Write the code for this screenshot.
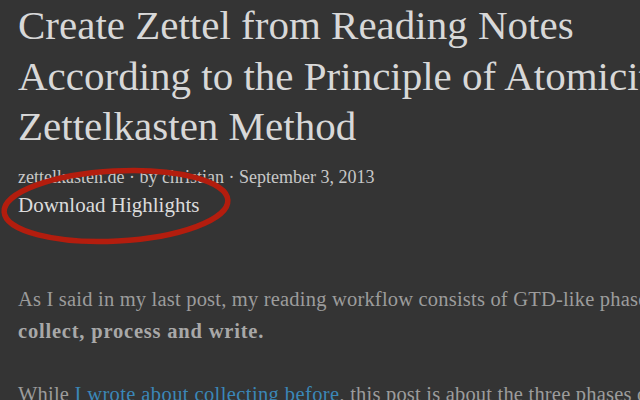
export default function App() {
  return (
    <div className="relative w-[640px] h-[400px] overflow-hidden bg-[#343434]" style={{ fontFamily: '"Liberation Serif", serif' }}>
      <div className="pl-[18px] whitespace-nowrap">
        <h1 className="text-[41px] leading-[50.5px] text-[#d8d8d8] font-normal">
          Create Zettel from Reading Notes
          <br />
          According to the Principle of Atomicity in the
          <br />
          Zettelkasten Method
        </h1>
        <div className="mt-[14px] text-[18px] leading-[22px] text-[#c8c8c8]">
          zettelkasten.de · by christian · September 3, 2013
        </div>
        <div className="mt-[4px] text-[21px] leading-[26px] text-[#dcdcdc]">Download Highlights</div>
        <p className="mt-[65px] text-[20.5px] leading-[32px] text-[#9c9c9c] tracking-[0.2px]">
          As I said in my last post, my reading workflow consists of GTD-like phases:
          <br />
          <b className="font-bold text-[#a8a8a8] tracking-[0.8px]">collect, process and write.</b>
        </p>
        <p className="mt-[31px] text-[20.5px] leading-[32px] text-[#9c9c9c] tracking-[0.2px]">
          While <a className="text-[#3b87b8] tracking-[0.4px]">I wrote about collecting before</a>, this post is about the three phases of
        </p>
      </div>
      <svg className="absolute left-0 top-0 pointer-events-none" width="640" height="400" viewBox="0 0 640 400">
        <ellipse cx="116" cy="206" rx="112" ry="35" fill="none" stroke="#b31d0e" strokeWidth="5.5" transform="rotate(-3 116 206)" />
      </svg>
    </div>
  );
}
